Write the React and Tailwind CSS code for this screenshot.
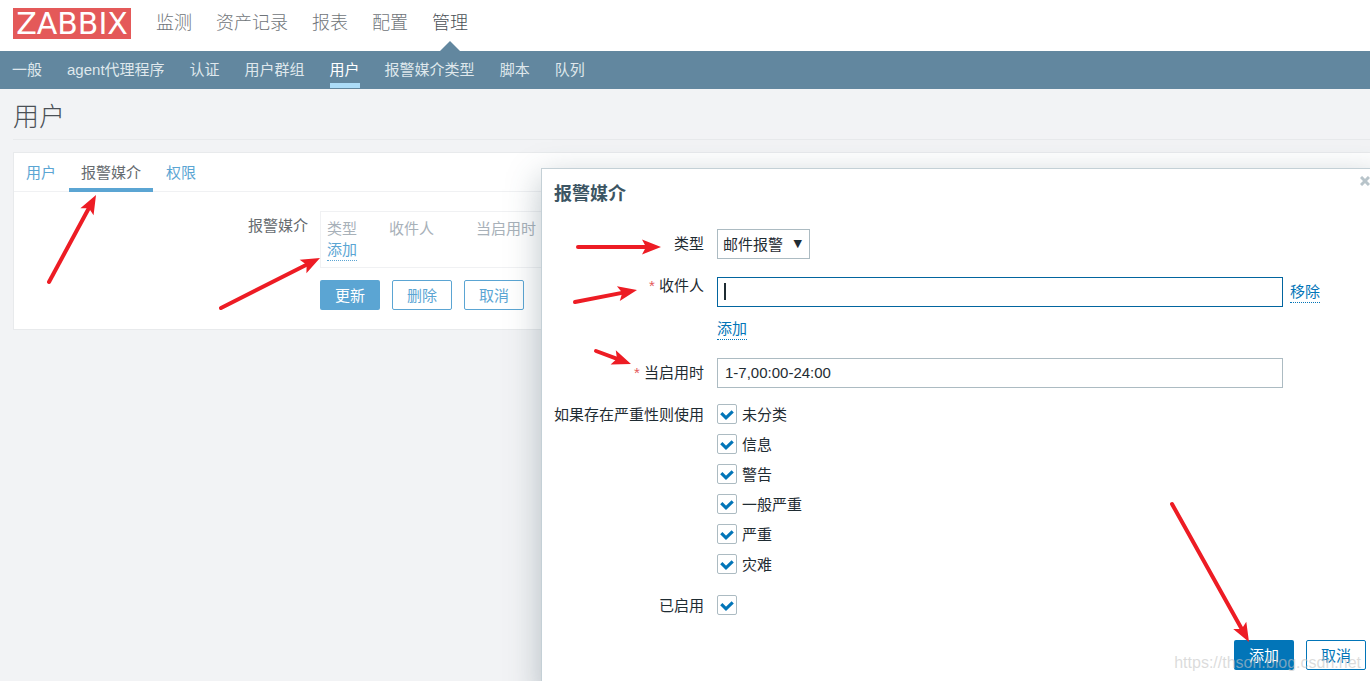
import React, { useState } from "react";

const MAIN_MENU = ["监测", "资产记录", "报表", "配置", "管理"];

const SUB_MENU = [
  "一般",
  "agent代理程序",
  "认证",
  "用户群组",
  "用户",
  "报警媒介类型",
  "脚本",
  "队列",
];

const SEVERITIES = ["未分类", "信息", "警告", "一般严重", "严重", "灾难"];

// tail (x1, y1) to tip (x2, y2)
const ARROWS = [
  { x1: 49, y1: 282, x2: 96, y2: 195 },
  { x1: 221, y1: 308, x2: 320, y2: 258 },
  { x1: 578, y1: 247, x2: 661, y2: 247 },
  { x1: 575, y1: 302, x2: 637, y2: 290 },
  { x1: 596, y1: 351, x2: 631, y2: 364 },
  { x1: 1172, y1: 504, x2: 1249, y2: 642 },
];

const Arrow = ({ x1, y1, x2, y2 }) => {
  const length = Math.hypot(x2 - x1, y2 - y1);
  const angle = (Math.atan2(y2 - y1, x2 - x1) * 180) / Math.PI;

  return (
    <g transform={`translate(${x1} ${y1}) rotate(${angle})`}>
      <line
        x1="0"
        y1="0"
        x2={length - 14}
        y2="0"
        stroke="#ed1c24"
        strokeWidth="4"
        strokeLinecap="round"
      />
      <path
        d="M0 0L-19 -7.5L-15 0L-19 7.5Z"
        transform={`translate(${length} 0)`}
        fill="#ed1c24"
      />
    </g>
  );
};

const Header = () => (
  <header>
    <div className="flex h-[51px] items-start bg-white pl-[13px]">
      <a
        href="#home"
        className="mt-2 flex h-[31px] w-[118px] items-center justify-center bg-[#e45959] font-['DejaVu_Sans'] text-[30px] leading-none font-normal text-white"
      >
        ZABBIX
      </a>
      <nav className="ml-[25px] flex gap-6 text-lg font-light text-[#6f7479]">
        {MAIN_MENU.map((item) => (
          <a
            key={item}
            href="#main"
            className={
              item === "管理"
                ? "relative h-[51px] pt-[9px] text-[#4a5056]"
                : "h-[51px] pt-[9px]"
            }
          >
            {item}
            {item === "管理" && (
              <span className="absolute bottom-0 left-1/2 -translate-x-1/2 border-x-10 border-b-10 border-x-transparent border-b-[#62879f]" />
            )}
          </a>
        ))}
      </nav>
    </div>
    <nav className="flex h-[38px] gap-[25px] bg-[#62879f] pl-3 leading-[37px] text-[#dfe7ec]">
      {SUB_MENU.map((item) => (
        <a
          key={item}
          href="#sub"
          className={
            item === "用户"
              ? "h-[37px] border-b-5 border-[#acdcf8] text-white"
              : "h-[37px]"
          }
        >
          {item}
        </a>
      ))}
    </nav>
  </header>
);

const UserForm = () => (
  <section className="-mr-3 ml-[13px] mt-3 h-[178px] border border-[#e8eaec] bg-white">
    <div className="flex h-[39px] gap-px border-b border-[#f0f1f3] leading-[39px] text-[#5ba5d3]">
      <a href="#user" className="px-3">
        用户
      </a>
      <a
        href="#media"
        className="h-[39px] border-b-4 border-[#5ba5d3] px-3 text-[#666b70]"
      >
        报警媒介
      </a>
      <a href="#permissions" className="px-3">
        权限
      </a>
    </div>
    <div className="mt-[19px] flex gap-3">
      <div className="w-[294px] pt-1 text-right text-[#666b70]">报警媒介</div>
      <div className="w-[720px]">
        <div className="h-[57px] border border-[#f0f1f3] px-[6px] pt-[6px]">
          <table className="text-left text-[#a8b1b9]">
            <thead>
              <tr>
                <th className="w-[62px] p-0 font-normal">类型</th>
                <th className="w-[87px] p-0 font-normal">收件人</th>
                <th className="w-[87px] p-0 font-normal">当启用时</th>
              </tr>
            </thead>
            <tbody>
              <tr>
                <td colSpan={3} className="p-0">
                  <button
                    type="button"
                    className="border-b border-dotted border-[#5ba5d3] leading-[20px] text-[#5ba5d3]"
                  >
                    添加
                  </button>
                </td>
              </tr>
            </tbody>
          </table>
        </div>
        <div className="mt-3 flex gap-3">
          <button
            type="button"
            className="h-[30px] w-[60px] rounded-xs bg-[#5ba5d3] text-white"
          >
            更新
          </button>
          <button
            type="button"
            className="h-[30px] w-[60px] rounded-xs border border-[#5ba5d3] text-[#5ba5d3]"
          >
            删除
          </button>
          <button
            type="button"
            className="h-[30px] w-[60px] rounded-xs border border-[#5ba5d3] text-[#5ba5d3]"
          >
            取消
          </button>
        </div>
      </div>
    </div>
  </section>
);

const CheckBox = ({ id, label }) => {
  const [checked, setChecked] = useState(true);

  return (
    <label htmlFor={id} className="flex h-5 items-center gap-[5px]">
      <span className="relative size-5">
        <input
          id={id}
          type="checkbox"
          aria-label={label || "已启用"}
          checked={checked}
          onChange={(e) => setChecked(e.target.checked)}
          className="block size-5 appearance-none rounded-xs border border-[#acbbc2] bg-white"
        />
        {checked && (
          <svg
            viewBox="0 0 20 20"
            className="pointer-events-none absolute inset-0 size-5"
          >
            <path
              d="M4.3 9.2L9 13.8L15.7 7.4"
              fill="none"
              stroke="#0275b8"
              strokeWidth="3.2"
            />
          </svg>
        )}
      </span>
      {label}
    </label>
  );
};

const FieldLabel = ({ htmlFor, required, children }) => (
  <label htmlFor={htmlFor} className="w-[150px] shrink-0 text-right">
    {required && <span className="text-[#e45959]">* </span>}
    {children}
  </label>
);

const MediaDialog = () => {
  const [period, setPeriod] = useState("1-7,00:00-24:00");
  const [sendTo, setSendTo] = useState("");

  return (
    <div
      role="dialog"
      aria-label="报警媒介"
      className="absolute -bottom-3 -right-3 left-[541px] top-[168px] border border-[#c4d0d6] bg-white pl-3 pr-[15px] text-[#1f2c33] shadow-[0_10px_32px_rgba(60,85,99,0.35)]"
    >
      <div className="flex items-start justify-between">
        <h4 className="pt-3 text-[18px] leading-[27px] font-bold text-[#3c5563]">
          报警媒介
        </h4>
        <button type="button" aria-label="关闭" className="-mr-1 pt-[7px]">
          <svg viewBox="0 0 10 10" className="size-[10px]">
            <path
              d="M1 1L9 9M9 1L1 9"
              stroke="#b8c4ca"
              strokeWidth="3"
              fill="none"
            />
          </svg>
        </button>
      </div>

      <div className="mt-[21px] flex gap-[13px] leading-[30px]">
        <FieldLabel htmlFor="type">类型</FieldLabel>
        <div className="relative">
          <select
            id="type"
            className="block h-[30px] w-[93px] appearance-none border border-[#acbbc2] bg-white pl-[5px]"
          >
            <option>邮件报警</option>
          </select>
          <span className="pointer-events-none absolute right-2 top-[6px] font-['DejaVu_Sans'] text-[11px] leading-[18px]">
            ▼
          </span>
        </div>
      </div>

      <div className="mt-[18px] flex gap-[13px] leading-[18px]">
        <FieldLabel htmlFor="sendto" required>
          收件人
        </FieldLabel>
        <div>
          <div className="flex items-center gap-[7px]">
            <div className="relative">
              <input
                id="sendto"
                type="text"
                value={sendTo}
                onChange={(e) => setSendTo(e.target.value)}
                className="block h-[30px] w-[566px] border border-[#02659f] px-[7px] caret-transparent outline-none"
              />
              <span className="pointer-events-none absolute left-[7px] top-[6px] h-[17px] w-[2px] bg-[#1f2c33]" />
            </div>
            <button
              type="button"
              className="border-b border-dotted border-[#0275b8] leading-[20px] text-[#0275b8]"
            >
              移除
            </button>
          </div>
          <button
            type="button"
            className="mt-3 block border-b border-dotted border-[#0275b8] leading-[20px] text-[#0275b8]"
          >
            添加
          </button>
        </div>
      </div>

      <div className="mt-[18px] flex gap-[13px] leading-[30px]">
        <FieldLabel htmlFor="period" required>
          当启用时
        </FieldLabel>
        <input
          id="period"
          type="text"
          value={period}
          onChange={(e) => setPeriod(e.target.value)}
          className="h-[30px] w-[566px] border border-[#acbbc2] px-[7px]"
        />
      </div>

      <div className="mt-4 flex gap-[13px]">
        <div className="w-[150px] text-right">如果存在严重性则使用</div>
        <div className="flex flex-col gap-[10px]">
          {SEVERITIES.map((name, i) => (
            <CheckBox key={name} id={`severity_${i}`} label={name} />
          ))}
        </div>
      </div>

      <div className="mt-[21px] flex gap-[13px]">
        <FieldLabel htmlFor="active">已启用</FieldLabel>
        <CheckBox id="active" />
      </div>

      <div className="mt-6 flex justify-end gap-3">
        <button
          type="button"
          className="h-[30px] w-[60px] rounded-xs bg-[#0275b8] text-white"
        >
          添加
        </button>
        <button
          type="button"
          className="h-[30px] w-[60px] rounded-xs border border-[#0275b8] text-[#0275b8]"
        >
          取消
        </button>
      </div>
    </div>
  );
};

const App = () => {
  return (
    <div className="relative h-screen overflow-hidden bg-[#f2f3f5] font-['Liberation_Sans','Noto_Sans_CJK_SC',sans-serif] text-[15px] leading-[21px]">
      <Header />
      <h1 className="ml-[13px] h-[51px] border-b border-[#e8eaec] pt-[10px] text-[26px] leading-9 font-light text-[#4a5056]">
        用户
      </h1>
      <UserForm />
      <MediaDialog />
      <svg
        aria-hidden="true"
        className="pointer-events-none absolute left-0 top-0 h-[681px] w-[1370px]"
      >
        {ARROWS.map((arrow) => (
          <Arrow key={arrow.x1} {...arrow} />
        ))}
      </svg>
      <div className="pointer-events-none absolute bottom-[9px] right-[9px] text-base leading-[18px] text-[#c4c4c4]/60">
        https://thson.blog.csdn.net
      </div>
    </div>
  );
};

export default App;
